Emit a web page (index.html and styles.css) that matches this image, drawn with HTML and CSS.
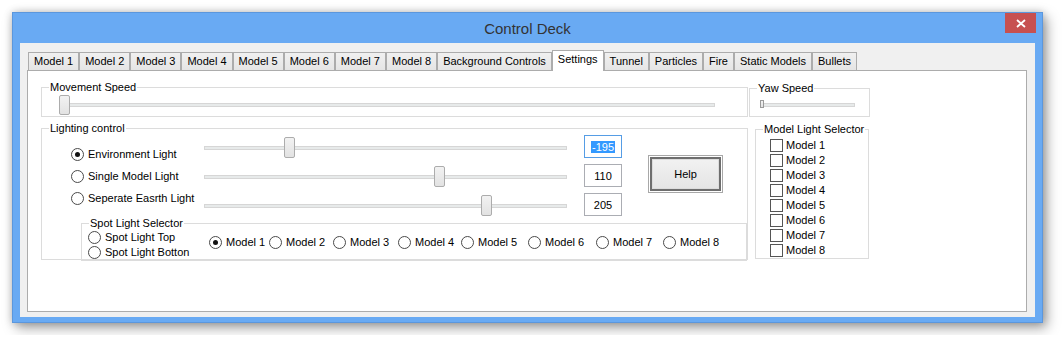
FILE: index.html
```html
<!DOCTYPE html>
<html lang="en">
<head>
  <meta charset="UTF-8">
  <meta name="viewport" content="width=device-width, initial-scale=1.0">
  <title>Control Deck</title>
  <link rel="stylesheet" href="styles.css">
</head>
<body>
  <div class="window">
    <div class="titlebar">
      <div class="title">Control Deck</div>
      <button class="close">
        <svg width="10" height="9" viewBox="0 0 10 9"><path d="M1 1L9 8M9 1L1 8" stroke="#fff" stroke-width="1.8" fill="none"/></svg>
      </button>
    </div>

    <div class="client">
      <!-- tab strip -->
      <div class="tabs">
        <div class="tab">Model 1</div>
        <div class="tab">Model 2</div>
        <div class="tab">Model 3</div>
        <div class="tab">Model 4</div>
        <div class="tab">Model 5</div>
        <div class="tab">Model 6</div>
        <div class="tab">Model 7</div>
        <div class="tab">Model 8</div>
        <div class="tab">Background Controls</div>
        <div class="tab active">Settings</div>
        <div class="tab">Tunnel</div>
        <div class="tab">Particles</div>
        <div class="tab">Fire</div>
        <div class="tab">Static Models</div>
        <div class="tab">Bullets</div>
      </div>

      <div class="panel">
        <div class="row">
          <fieldset class="group movement">
            <legend>Movement Speed</legend>
            <div class="slider"><span class="thumb" style="left: 0px"></span></div>
          </fieldset>
          <fieldset class="group yaw">
            <legend>Yaw Speed</legend>
            <div class="slider"><span class="thumb mini" style="left: 0px"></span></div>
          </fieldset>
        </div>

        <div class="row bottom-row">
          <fieldset class="group lighting">
            <legend>Lighting control</legend>
            <div class="lighting-body">
              <div class="light-options">
                <label class="option"><span class="radio checked"></span>Environment Light</label>
                <label class="option"><span class="radio"></span>Single Model Light</label>
                <label class="option"><span class="radio"></span>Seperate Easrth Light</label>
              </div>
              <div class="light-sliders">
                <div class="slider"><span class="thumb" style="left: 81px"></span></div>
                <div class="slider"><span class="thumb" style="left: 231px"></span></div>
                <div class="slider"><span class="thumb" style="left: 278px"></span></div>
              </div>
              <div class="light-values">
                <div class="textbox focused"><span class="selected">-195</span></div>
                <div class="textbox">110</div>
                <div class="textbox">205</div>
              </div>
              <button class="help">Help</button>
            </div>

            <fieldset class="group spot">
              <legend>Spot Light Selector</legend>
              <div class="spot-body">
                <div class="spot-options">
                  <label class="option"><span class="radio"></span>Spot Light Top</label>
                  <label class="option"><span class="radio"></span>Spot Light Botton</label>
                </div>
                <div class="spot-models">
                  <label class="option"><span class="radio checked"></span>Model 1</label>
                  <label class="option"><span class="radio"></span>Model 2</label>
                  <label class="option"><span class="radio"></span>Model 3</label>
                  <label class="option"><span class="radio"></span>Model 4</label>
                  <label class="option"><span class="radio"></span>Model 5</label>
                  <label class="option"><span class="radio"></span>Model 6</label>
                  <label class="option"><span class="radio"></span>Model 7</label>
                  <label class="option"><span class="radio"></span>Model 8</label>
                </div>
              </div>
            </fieldset>
          </fieldset>

          <fieldset class="group model-light">
            <legend>Model Light Selector</legend>
            <label class="check"><span class="box"></span>Model 1</label>
            <label class="check"><span class="box"></span>Model 2</label>
            <label class="check"><span class="box"></span>Model 3</label>
            <label class="check"><span class="box"></span>Model 4</label>
            <label class="check"><span class="box"></span>Model 5</label>
            <label class="check"><span class="box"></span>Model 6</label>
            <label class="check"><span class="box"></span>Model 7</label>
            <label class="check"><span class="box"></span>Model 8</label>
          </fieldset>
        </div>
      </div>
    </div>
  </div>
</body>
</html>
```

FILE: styles.css
```css
body {
  margin: 0;
  padding: 12px;
  background-color: #fff;
  font-family: "Liberation Sans", Arial, sans-serif;
  font-size: 11px;
  color: #000;
}

.window {
  width: 1031px;
  box-sizing: border-box;
  border: 1px solid #5b97dd;
  background-color: #69aaf3;
  box-shadow: 0 0 8px rgba(0, 0, 0, 0.2), 4px 5px 12px rgba(0, 0, 0, 0.35);
}

.titlebar {
  height: 30px;
  display: grid;
  grid-template-columns: 1fr auto 1fr;
  align-items: center;
}

.title {
  grid-column: 2;
  font-size: 15px;
  color: #333;
}

.close {
  grid-column: 3;
  justify-self: end;
  align-self: start;
  margin-right: 6px;
  width: 31px;
  height: 20px;
  border: none;
  padding: 0;
  background-color: #c75050;
  display: flex;
  align-items: center;
  justify-content: center;
}

.client {
  margin: 0 7px 5px;
  height: 274px;
  box-sizing: border-box;
  padding: 7px 8px 5px 7px;
  background-color: #f0f0f0;
  display: flex;
  flex-direction: column;
}

.tabs {
  display: flex;
  align-items: flex-end;
  height: 20px;
  padding-left: 1px;
}

.tab {
  height: 18px;
  box-sizing: border-box;
  padding: 0 5px;
  border: 1px solid #acacac;
  border-bottom: none;
  background: linear-gradient(#f0f0f0, #e5e5e5);
  line-height: 17px;
  white-space: nowrap;
}

.tab.active {
  height: 21px;
  margin-bottom: -1px;
  position: relative;
  z-index: 1;
  background: #fff;
}

.panel {
  flex: 1;
  background-color: #fff;
  border: 1px solid #acacac;
  padding: 9px 0 0 13px;
}

.row {
  display: flex;
  align-items: flex-start;
}

.bottom-row {
  margin-top: 4px;
}

/* group boxes */
.group {
  margin: 0;
  padding: 0 0 0 7px;
  min-width: 0;
  box-sizing: border-box;
  border: 1px solid #dcdcdc;
}

.group legend {
  padding: 0 1px;
  line-height: 14px;
  white-space: nowrap;
}

.movement {
  width: 707px;
  padding-top: 1px;
  padding-bottom: 1px;
}

.movement .slider {
  width: 657px;
  height: 20px;
  margin-left: 10px;
}

.yaw {
  width: 121px;
  margin: 1px 0 0 1px;
  padding-bottom: 1px;
}

.yaw .slider {
  width: 96px;
  height: 20px;
  margin-left: 3px;
}

/* sliders */
.slider {
  position: relative;
}

.slider::before {
  content: "";
  position: absolute;
  left: 1px;
  right: 1px;
  top: calc(50% - 2px);
  height: 4px;
  box-sizing: border-box;
  background-color: #e7eaea;
  border: 1px solid #d6d6d6;
}

.thumb {
  position: absolute;
  top: 0;
  width: 11px;
  height: 100%;
  box-sizing: border-box;
  border: 1px solid #acacac;
  border-radius: 2px;
  background: linear-gradient(#f2f2f2, #e2e2e2);
}

.thumb.mini {
  top: 5px;
  width: 4px;
  height: 8px;
  border-radius: 0;
  border-color: #9a9a9a;
}

/* lighting */
.lighting {
  width: 707px;
}

.lighting-body {
  display: flex;
  align-items: flex-start;
}

.light-options {
  width: 132px;
  margin: 12px 0 0 22px;
  display: flex;
  flex-direction: column;
  gap: 8px;
}

.option {
  display: flex;
  align-items: center;
  gap: 4px;
  line-height: 14px;
  white-space: nowrap;
}

.radio {
  flex: none;
  position: relative;
  width: 13px;
  height: 13px;
  box-sizing: border-box;
  border: 1px solid #4a4a4a;
  border-radius: 50%;
  background-color: #fff;
}

.radio.checked::after {
  content: "";
  position: absolute;
  inset: 3px;
  border-radius: 50%;
  background-color: #111;
}

.light-sliders {
  width: 365px;
  margin-top: 2px;
  display: flex;
  flex-direction: column;
  gap: 8px;
}

.light-sliders .slider {
  height: 21px;
}

.light-values {
  margin-left: 16px;
  display: flex;
  flex-direction: column;
  gap: 6px;
}

.textbox {
  width: 38px;
  height: 23px;
  box-sizing: border-box;
  border: 1px solid #abadb3;
  display: flex;
  align-items: center;
  justify-content: center;
  background-color: #fff;
}

.textbox.focused {
  border-color: #569de5;
}

.selected {
  background-color: #3399ff;
  color: #fff;
  padding: 0 1px;
}

.help {
  margin: 20px 0 0 26px;
  width: 75px;
  height: 38px;
  padding: 0;
  font: inherit;
  color: #000;
  border: 1px solid #a8a8a8;
  background: linear-gradient(#f3f3f3, #e3e3e3);
  box-shadow: inset 0 0 0 1px #fff, inset 0 0 0 3px #6e6e6e, inset 0 0 0 4px #dcdcdc;
}

/* spot light selector */
.spot {
  width: 666px;
  margin: 0 0 -2px 32px;
}

.spot-body {
  display: flex;
  align-items: flex-start;
}

.spot-options {
  width: 121px;
  margin-left: -1px;
  display: flex;
  flex-direction: column;
}

.spot-options .option {
  line-height: 15px;
}

.spot-models {
  margin-top: 5px;
  display: grid;
  grid-template-columns: 60px 64px 65px 63px 67px 68px 67px auto;
}

/* model light selector */
.model-light {
  width: 114px;
  margin: 1px 0 0 7px;
  padding-top: 2px;
}

.check {
  display: flex;
  align-items: center;
  gap: 3px;
  margin-left: 7px;
  line-height: 15px;
  white-space: nowrap;
}

.box {
  flex: none;
  width: 13px;
  height: 13px;
  box-sizing: border-box;
  border: 1px solid #555;
  background-color: #fff;
}
```
